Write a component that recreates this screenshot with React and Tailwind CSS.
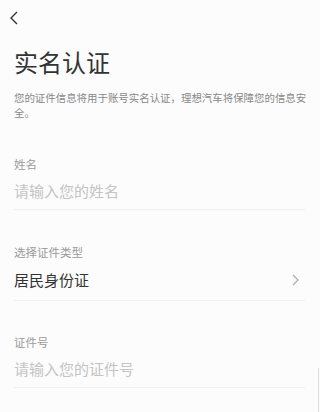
const font = "font-['Noto_Sans_CJK_SC','Noto_Sans',sans-serif]";

function Field({ label, value, placeholder, arrow, labelClass, rowClass }) {
  return (
    <div>
      <p className={`text-[11.5px] leading-[16px] text-[#9a9a9a] ${labelClass}`}>{label}</p>
      <div className={`flex items-center justify-between border-b border-[#efefef] ${rowClass}`}>
        {value ? (
          <span className="text-[15px] leading-[20px] text-[#333]">{value}</span>
        ) : (
          <span className="text-[15px] leading-[20px] text-[#c4c4c4]">{placeholder}</span>
        )}
        {arrow && (
          <svg width="8" height="12" viewBox="0 0 8 12" className="mr-[6px]">
            <path d="M2 1l5 5-5 5" fill="none" stroke="#aaa" strokeWidth="1.2" />
          </svg>
        )}
      </div>
    </div>
  );
}

export default function App() {
  return (
    <div className={`relative min-h-[412px] w-[320px] bg-[#fcfcfc] ${font}`}>
      {/* top bar */}
      <div className="flex h-9 items-center pl-[9px]">
        <svg width="10" height="16" viewBox="0 0 10 16">
          <path d="M8 2L2 8l6 6" fill="none" stroke="#333" strokeWidth="1.4" />
        </svg>
      </div>

      <div className="px-[14px] pr-[15px]">
        <h1 className="mt-[14px] text-[24px] leading-[24px] text-[#333]">实名认证</h1>
        <p className="mt-[16px] -mr-[6px] text-[10.45px] leading-[15px] text-[#888]">
          您的证件信息将用于账号实名认证，理想汽车将保障您的信息安全。
        </p>

        <Field label="姓名" placeholder="请输入您的姓名" labelClass="mt-[36px]" rowClass="h-[38px]" />
        <Field label="选择证件类型" value="居民身份证" arrow labelClass="mt-[34px]" rowClass="h-[41px]" />
        <Field label="证件号" placeholder="请输入您的证件号" labelClass="mt-[33px]" rowClass="h-[38px]" />
      </div>

      {/* scroll indicator */}
      <div className="absolute right-[1px] top-[368px] bottom-0 w-[1px] bg-[#dcdcdc]" />
    </div>
  );
}
